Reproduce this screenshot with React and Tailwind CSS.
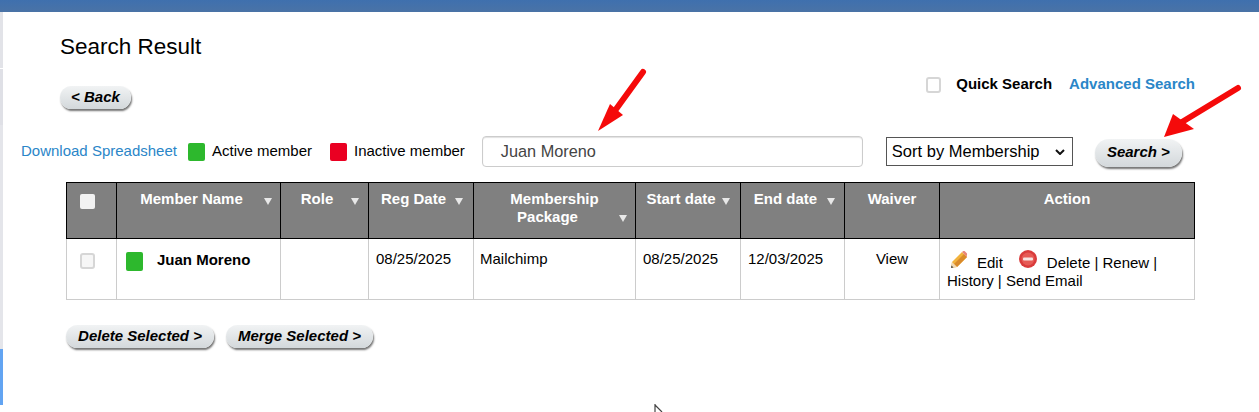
import React from 'react';

const columns = [
  { label: 'Member Name', width: 'w-[164px]', pad: 'pr-[14px]', arrowPos: 'right-[8px] top-[15px]' },
  { label: 'Role', width: 'w-[88px]', pad: 'pr-[15px]', arrowPos: 'right-[9px] top-[15px]' },
  { label: 'Reg Date', width: 'w-[105px]', pad: 'pr-[15px]', arrowPos: 'right-[10px] top-[15px]' },
  { label: 'Membership', sub: 'Package', width: 'w-[162px]', pad: '', arrowPos: 'right-[8px] top-[32px]' },
  { label: 'Start date', width: 'w-[105px]', pad: 'pr-[14px]', arrowPos: 'right-[10px] top-[15px]' },
  { label: 'End date', width: 'w-[104px]', pad: 'pr-[14px]', arrowPos: 'right-[9px] top-[15px]' },
  { label: 'Waiver', width: 'w-[95px]', pad: '' },
  { label: 'Action', width: 'w-[255px]', pad: '' },
];

const PillButton = ({ children, className = '' }) => (
  <button className={`h-[23px] rounded-full bg-gradient-to-b from-[#f1f3f4] to-[#d3d8db] pb-[2px] text-[15px] leading-[20px] font-bold italic text-black shadow-[1px_2px_2px_rgba(0,0,0,0.55)] ${className}`}>
    {children}
  </button>
);

const Square = () => <span className="block w-[17px] h-[18px] rounded-[2px] bg-[#2db82d]" />;

const Check = ({ className = '' }) => (
  <span className={`block w-[15px] h-[16px] rounded-[3px] border-2 border-[#d6d6d6] ${className}`} />
);

const App = () => {
  return (
    <div className="relative h-[412px] overflow-hidden bg-white text-black font-['Liberation_Sans',Arial,sans-serif] text-[15px]">
      <div className="h-[12px] bg-gradient-to-b from-[#3f70ae] to-[#4a73a6]" />

      {/* left strip of the page behind */}
      <div className="absolute left-0 top-[12px] bottom-0 flex w-[3px] flex-col">
        <div className="h-[56px] bg-[#e2e3e8]" />
        <div className="h-[1px] bg-white" />
        <div className="h-[56px] bg-[#dfe0e6]" />
        <div className="h-[224px] bg-[#e4e5ea]" />
        <div className="h-[56px] bg-[#62a4f2]" />
      </div>

      <div className="pl-[60px] pr-[64px]">
        <h1 className="pt-[22px] text-[22.5px] leading-[26px] font-normal">Search Result</h1>

        <div className="mt-[13px] flex items-start justify-between">
          <PillButton className="mt-[13px] w-[71px]">&lt; Back</PillButton>
          <div className="flex h-[23px] items-center">
            <Check />
            <span className="ml-[15px] font-bold">Quick Search</span>
            <a className="ml-[17px] font-bold text-[#2a86c8]">Advanced Search</a>
          </div>
        </div>
      </div>

      <div className="mt-[27px] flex h-[31px] items-center pl-[21px]">
        <a className="text-[#2a86c8]">Download Spreadsheet</a>
        <span className="ml-[11px]"><Square /></span>
        <span className="ml-[7px]">Active member</span>
        <span className="ml-[18px] block w-[17px] h-[18px] rounded-[2px] bg-[#ea0022]" />
        <span className="ml-[7px]">Inactive member</span>
        <div className="ml-[17px] flex h-[31px] w-[381px] items-center rounded-[4px] border border-[#ccc] pl-[18px] text-[16.3px] text-[#444] shadow-[inset_0_1px_1px_rgba(0,0,0,0.12)]">
          Juan Moreno
        </div>
        <div className="ml-[23px] flex h-[29px] w-[187px] items-center justify-between border border-[#555] pl-[5px] pr-[7px] text-[16.5px]">
          Sort by Membership
          <svg width="10" height="6" viewBox="0 0 10 6" fill="none" stroke="#111" strokeWidth="2"><path d="M1 1l4 4 4-4" /></svg>
        </div>
        <PillButton className="ml-[22px] mt-[2px] h-[28px] w-[87px]">Search &gt;</PillButton>
      </div>

      <div className="ml-[66px] mt-[15px] w-[1128px]">
        <table className="w-full table-fixed border-collapse">
          <thead>
            <tr className="h-[56px] bg-[#808080] text-white">
              <th className="w-[50px] border border-black pt-[11px] pl-[13px] align-top">
                <span className="block h-[15px] w-[15px] rounded-[2px] bg-[#f2f2f2]" />
              </th>
              {columns.map((c) => (
                <th key={c.label} className={`relative whitespace-nowrap border border-black pt-[7px] align-top font-bold leading-[18px] ${c.width} ${c.pad}`}>
                  {c.label}
                  {c.sub && <><br /><span className="pr-[14px]">{c.sub}</span></>}
                  {c.arrowPos && (
                    <span className={`absolute h-0 w-0 border-x-[4px] border-t-[7px] border-x-transparent border-t-[#e8e8e8] ${c.arrowPos}`} />
                  )}
                </th>
              ))}
            </tr>
          </thead>
          <tbody>
            <tr className="h-[61px] align-top">
              <td className="border border-[#ccc] pt-[14px] pl-[13px]"><Check className="bg-[#f6f6f6]" /></td>
              <td className="border border-[#ccc] pt-[13px] pl-[9px]">
                <div className="flex items-start">
                  <span className="block h-[19px] w-[17px] rounded-[2px] bg-[#2db82d]" />
                  <span className="ml-[14px] -mt-[1px] font-bold leading-[17px]">Juan Moreno</span>
                </div>
              </td>
              <td className="border border-[#ccc]" />
              <td className="border border-[#ccc] pl-[7px] pt-[9px]">08/25/2025</td>
              <td className="border border-[#ccc] pl-[6px] pt-[9px]">Mailchimp</td>
              <td className="border border-[#ccc] pl-[7px] pt-[9px]">08/25/2025</td>
              <td className="border border-[#ccc] pl-[7px] pt-[9px]">12/03/2025</td>
              <td className="border border-[#ccc] pt-[9px] text-center">View</td>
              <td className="border border-[#ccc] pl-[7px] pt-[15px] leading-[18px]">
                <div className="ml-[3px] flex h-[18px] items-start">
                  <svg className="-mt-[3px] shrink-0" width="18" height="18" viewBox="0 0 18 18">
                    <path d="M1 17l1-6L12 1l5 5L7 16z" fill="#f2b33d" />
                    <path d="M4 13L14 3l3 3L7 16z" fill="#d98a2b" />
                    <path d="M12 1l1-.7c.6-.4 1.3-.4 1.8 0l2 2c.4.5.4 1.2 0 1.8L17 6z" fill="#e8857a" />
                    <path d="M1 17l1-6 5 5z" fill="#f1d9b5" />
                    <path d="M1 17l.5-2.5 2 2z" fill="#444" />
                  </svg>
                  <span className="ml-[9px]">Edit</span>
                  <svg className="-mt-[4px] ml-[16px] shrink-0" width="18" height="18" viewBox="0 0 18 18">
                    <circle cx="9" cy="9" r="9" fill="#d93b3b" />
                    <circle cx="9" cy="9" r="6.5" fill="#e65a55" />
                    <rect x="4" y="7.5" width="10" height="3" rx="1" fill="#f7e4e2" />
                  </svg>
                  <span className="ml-[10px]">Delete | Renew |</span>
                </div>
                <div>History | Send Email</div>
              </td>
            </tr>
          </tbody>
        </table>
      </div>

      <div className="ml-[66px] mt-[25px] flex gap-[12px]">
        <PillButton className="w-[148px]">Delete Selected &gt;</PillButton>
        <PillButton className="w-[147px]">Merge Selected &gt;</PillButton>
      </div>

      {/* annotation arrows */}
      <svg className="pointer-events-none absolute left-[590px] top-[60px]" width="660" height="85" viewBox="590 60 660 85" fill="#f50a0a">
        <path d="M643 72L614 112" stroke="#f50a0a" strokeWidth="6" strokeLinecap="round" />
        <path d="M598 131L610 104L623 115Z" />
        <path d="M1238 88L1182 122" stroke="#f50a0a" strokeWidth="6" strokeLinecap="round" />
        <path d="M1164 137L1173 114L1194 129Z" />
      </svg>

      <svg className="absolute left-[654px] top-[404px]" width="10" height="8" viewBox="0 0 10 8">
        <path d="M1 0v8M1 1l7 7" stroke="#444" strokeWidth="1.2" fill="none" />
      </svg>
    </div>
  );
};

export default App;
